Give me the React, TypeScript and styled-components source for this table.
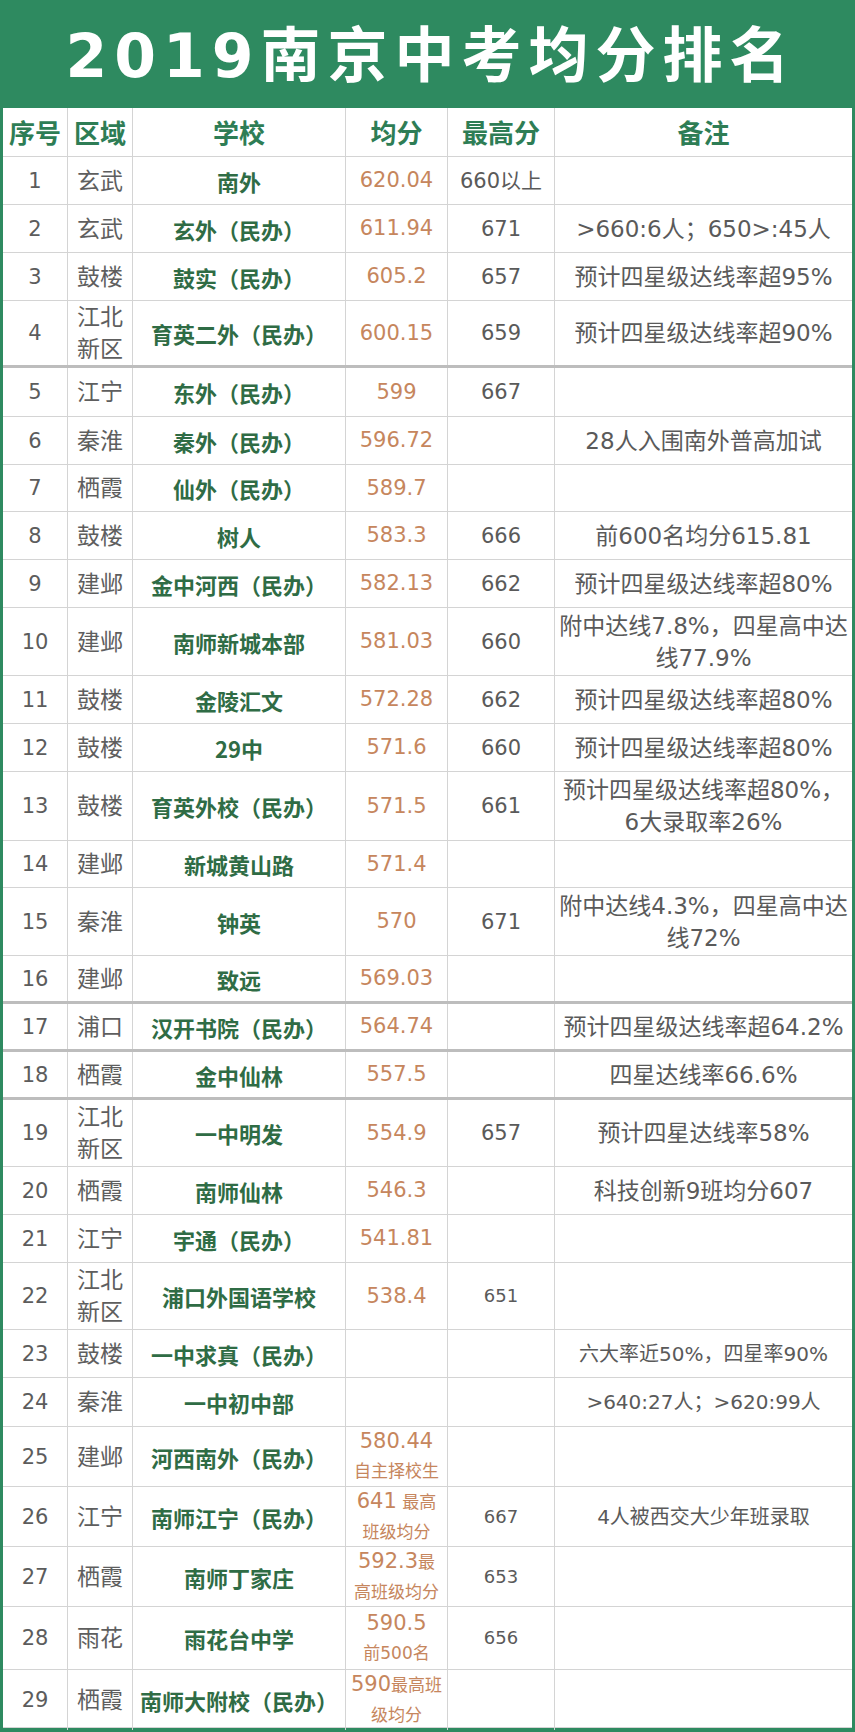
import React from 'react'
import styled, { createGlobalStyle } from 'styled-components'

const GREEN = '#2e8a60'
const LINE = '#d4d4d4'

const GlobalStyle = createGlobalStyle`
  html, body {
    margin: 0;
    padding: 0;
    background: #ffffff;
  }
  body {
    font-family: "DejaVu Sans", "Noto Sans CJK SC", sans-serif;
  }
`

interface RankRow {
  no: number
  area: string
  school: string
  avg?: string
  // small text after the score on its line, then the second line
  avgNote?: [string, string]
  max?: string
  maxSmall?: boolean
  note?: string
  noteSmall?: boolean
  h?: number
  thick?: boolean
}

const rows: RankRow[] = [
  { no: 1, area: '玄武', school: '南外', avg: '620.04', max: '660以上' },
  { no: 2, area: '玄武', school: '玄外（民办）', avg: '611.94', max: '671', note: '>660:6人；650>:45人' },
  { no: 3, area: '鼓楼', school: '鼓实（民办）', avg: '605.2', max: '657', note: '预计四星级达线率超95%' },
  { no: 4, area: '江北新区', school: '育英二外（民办）', avg: '600.15', max: '659', note: '预计四星级达线率超90%', h: 67, thick: true },
  { no: 5, area: '江宁', school: '东外（民办）', avg: '599', max: '667', h: 49 },
  { no: 6, area: '秦淮', school: '秦外（民办）', avg: '596.72', note: '28人入围南外普高加试' },
  { no: 7, area: '栖霞', school: '仙外（民办）', avg: '589.7', h: 47 },
  { no: 8, area: '鼓楼', school: '树人', avg: '583.3', max: '666', note: '前600名均分615.81' },
  { no: 9, area: '建邺', school: '金中河西（民办）', avg: '582.13', max: '662', note: '预计四星级达线率超80%' },
  { no: 10, area: '建邺', school: '南师新城本部', avg: '581.03', max: '660', note: '附中达线7.8%，四星高中达\n线77.9%', h: 68 },
  { no: 11, area: '鼓楼', school: '金陵汇文', avg: '572.28', max: '662', note: '预计四星级达线率超80%' },
  { no: 12, area: '鼓楼', school: '29中', avg: '571.6', max: '660', note: '预计四星级达线率超80%' },
  { no: 13, area: '鼓楼', school: '育英外校（民办）', avg: '571.5', max: '661', note: '预计四星级达线率超80%，\n6大录取率26%', h: 69 },
  { no: 14, area: '建邺', school: '新城黄山路', avg: '571.4', h: 47 },
  { no: 15, area: '秦淮', school: '钟英', avg: '570', max: '671', note: '附中达线4.3%，四星高中达\n线72%', h: 68 },
  { no: 16, area: '建邺', school: '致远', avg: '569.03', thick: true },
  { no: 17, area: '浦口', school: '汉开书院（民办）', avg: '564.74', note: '预计四星级达线率超64.2%', thick: true },
  { no: 18, area: '栖霞', school: '金中仙林', avg: '557.5', note: '四星达线率66.6%', thick: true },
  { no: 19, area: '江北新区', school: '一中明发', avg: '554.9', max: '657', note: '预计四星达线率58%', h: 67 },
  { no: 20, area: '栖霞', school: '南师仙林', avg: '546.3', note: '科技创新9班均分607' },
  { no: 21, area: '江宁', school: '宇通（民办）', avg: '541.81' },
  { no: 22, area: '江北新区', school: '浦口外国语学校', avg: '538.4', max: '651', maxSmall: true, h: 67 },
  { no: 23, area: '鼓楼', school: '一中求真（民办）', note: '六大率近50%，四星率90%', noteSmall: true },
  { no: 24, area: '秦淮', school: '一中初中部', note: '>640:27人；>620:99人', noteSmall: true, h: 49 },
  { no: 25, area: '建邺', school: '河西南外（民办）', avg: '580.44', avgNote: ['', '自主择校生'], h: 60 },
  { no: 26, area: '江宁', school: '南师江宁（民办）', avg: '641', avgNote: [' 最高', '班级均分'], max: '667', maxSmall: true, note: '4人被西交大少年班录取', noteSmall: true, h: 60 },
  { no: 27, area: '栖霞', school: '南师丁家庄', avg: '592.3', avgNote: ['最', '高班级均分'], max: '653', maxSmall: true, h: 60 },
  { no: 28, area: '雨花', school: '雨花台中学', avg: '590.5', avgNote: ['', '前500名'], max: '656', maxSmall: true, h: 63 },
  { no: 29, area: '栖霞', school: '南师大附校（民办）', avg: '590', avgNote: ['最高班', '级均分'], h: 58 },
]

const App = () => {
  return (
    <Frame>
      <GlobalStyle />
      <TitleBar>2019南京中考均分排名</TitleBar>
      <Table>
        <Row $h={49}>
          <HeadCell>序号</HeadCell>
          <HeadCell>区域</HeadCell>
          <HeadCell>学校</HeadCell>
          <HeadCell>均分</HeadCell>
          <HeadCell>最高分</HeadCell>
          <HeadCell>备注</HeadCell>
        </Row>
        {rows.map((r) => (
          <Row key={r.no} $h={r.h ?? 48} $thick={r.thick}>
            <NumCell>{r.no}</NumCell>
            <AreaCell>{r.area}</AreaCell>
            <SchoolCell>{r.school}</SchoolCell>
            <AvgCell>
              {r.avg && (
                <AvgText>
                  <AvgLine>
                    {r.avg}
                    {r.avgNote?.[0] && <AvgNote>{r.avgNote[0]}</AvgNote>}
                  </AvgLine>
                  {r.avgNote?.[1] && (
                    <AvgLine>
                      <AvgNote>{r.avgNote[1]}</AvgNote>
                    </AvgLine>
                  )}
                </AvgText>
              )}
            </AvgCell>
            <MaxCell $small={r.maxSmall}>{r.max}</MaxCell>
            <NoteCell $small={r.noteSmall}>{r.note}</NoteCell>
          </Row>
        ))}
      </Table>
    </Frame>
  )
}

const Frame = styled.div`
  width: 855px;
  box-sizing: border-box;
  background: ${GREEN};
  border-style: solid;
  border-color: ${GREEN};
  border-width: 0 3px 4px 3px;
`

const TitleBar = styled.div`
  height: 108px;
  display: flex;
  align-items: center;
  justify-content: center;
  padding: 4px 0 0 7px;
  box-sizing: border-box;
  font-family: "DejaVu Sans", "Noto Sans CJK SC", sans-serif;
  font-size: 60px;
  font-weight: 700;
  letter-spacing: 7px;
  line-height: 1;
  color: #ffffff;
`

const Table = styled.div`
  background: #ffffff;
  display: flex;
  flex-direction: column;
`

const Row = styled.div<{ $h: number; $thick?: boolean }>`
  display: grid;
  grid-template-columns: 65px 65px 213px 102px 107px 1fr;
  height: ${(p) => p.$h}px;
  box-sizing: border-box;
  border-bottom: ${(p) => (p.$thick ? `3px solid #bdbdbd` : `1px solid ${LINE}`)};
`

const Cell = styled.div`
  display: flex;
  align-items: center;
  justify-content: center;
  text-align: center;
  box-sizing: border-box;
  border-right: 1px solid ${LINE};
  padding: 0 3px;
  color: #5a5a5a;
  font-size: 23px;
  line-height: 32px;

  &:last-child {
    border-right: none;
  }
`

const HeadCell = styled(Cell)`
  font-family: "Noto Sans CJK SC", sans-serif;
  font-size: 26px;
  font-weight: 700;
  color: #2e7d55;
  padding: 0;
`

const NumCell = styled(Cell)`
  font-size: 21px;
  color: #5c5c5c;
`

const AreaCell = styled(Cell)`
  padding: 0 6px;
  color: #5e5e5e;
`

const SchoolCell = styled(Cell)`
  font-family: "Noto Sans CJK SC", sans-serif;
  font-size: 22px;
  font-weight: 700;
  color: #2f6c45;
  padding: 0;
`

const AvgCell = styled(Cell)`
  padding: 0 2px;
`

const AvgText = styled.div`
  display: flex;
  flex-direction: column;
  align-items: center;
  color: #c6865d;
`

const AvgLine = styled.div`
  font-size: 21px;
  line-height: 29px;
  white-space: nowrap;
`

const AvgNote = styled.span`
  font-size: 17px;
`

const MaxCell = styled(Cell)<{ $small?: boolean }>`
  font-size: ${(p) => (p.$small ? 18 : 21)}px;
  color: #5a5a5a;
`

const NoteCell = styled(Cell)<{ $small?: boolean }>`
  font-size: ${(p) => (p.$small ? 20 : 23)}px;
  white-space: pre-line;
  padding: 0 2px;
`

export default App
